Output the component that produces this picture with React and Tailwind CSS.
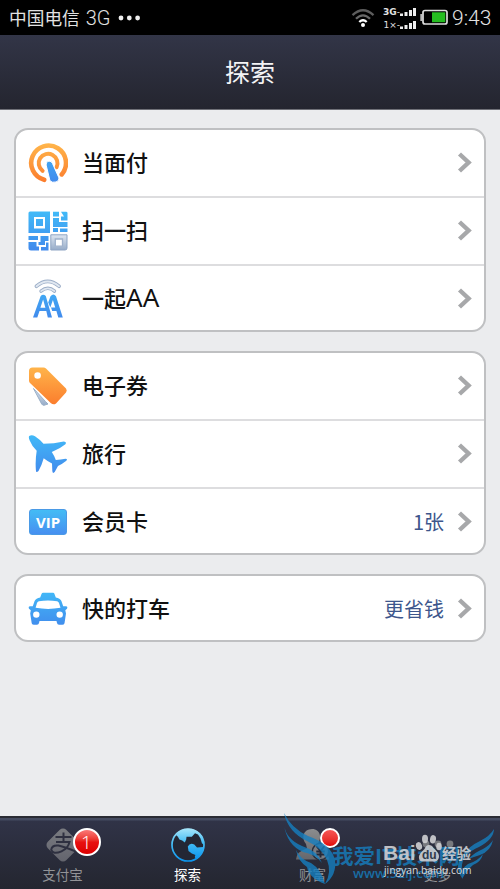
import React from "react";

const Defs = () => (
  <svg className="absolute h-0 w-0" aria-hidden="true">
    <defs>
      <linearGradient id="blue" x1="0" y1="0" x2="0" y2="40" gradientUnits="userSpaceOnUse">
        <stop offset="0" stopColor="#41bbf8" />
        <stop offset="1" stopColor="#4189ec" />
      </linearGradient>
      <linearGradient id="orange" x1="0" y1="0" x2="0" y2="40" gradientUnits="userSpaceOnUse">
        <stop offset="0" stopColor="#ffb64b" />
        <stop offset="1" stopColor="#fb7b2c" />
      </linearGradient>
      <linearGradient id="steel" x1="0" y1="0" x2="0" y2="1">
        <stop offset="0" stopColor="#dde6f1" />
        <stop offset="1" stopColor="#97acc8" />
      </linearGradient>
      <linearGradient id="globe" x1="0" y1="0" x2="0" y2="1">
        <stop offset="0" stopColor="#a5e5fa" />
        <stop offset="0.45" stopColor="#45bdf4" />
        <stop offset="1" stopColor="#0c95ee" />
      </linearGradient>
      <linearGradient id="gray" x1="0" y1="0" x2="1" y2="1">
        <stop offset="0" stopColor="#7b7d82" />
        <stop offset="1" stopColor="#62636c" />
      </linearGradient>
      <linearGradient id="person" x1="0" y1="0" x2="0" y2="1">
        <stop offset="0" stopColor="#8b8c8e" />
        <stop offset="1" stopColor="#66676c" />
      </linearGradient>
    </defs>
  </svg>
);

const Icon = ({ children }) => (
  <svg width="40" height="40" viewBox="0 0 40 40" className="block shrink-0">{children}</svg>
);

const PayIcon = () => (
  <Icon>
    <g fill="none" stroke="url(#orange)" strokeLinecap="round">
      <path d="M16.2 36.8A17.4 17.4 0 1 1 33.7 31.4" strokeWidth="4.6" />
      <path d="M14.6 27.8A9.4 9.4 0 1 1 28.6 24.2" strokeWidth="4" />
    </g>
    <path d="M18.1 22Q17.8 18.3 21 18.1Q23.4 18 24.5 20.5L31 35Q31.2 38 28 39Q24 40 22 37.8Z" fill="url(#blue)" stroke="#fff" strokeWidth="1" />
  </Icon>
);

const ScanIcon = () => (
  <Icon>
    <g fill="url(#blue)">
      <path fillRule="evenodd" d="M2 .5H22V22H.5V2Q.5.5 2 .5ZM6 6V17.5H17V6Z" />
      <path d="M8 8H15V15H8Z" />
      <path d="M25 .8H31V5.5H25ZM33 .8H38Q39.5.8 39.5 2V9.5H33V5.5H36ZM25 7H31V11H39.5V16H25ZM25 17H30V21H25ZM32 17.5H39.5V21H32Z" />
      <path d="M.5 25H10V29H.5ZM12.5 25H20.5V30H17V34H10.5V31H12.5ZM.5 31H8.5V35.5H11V39.5H3Q.5 39.5.5 37ZM13 36H18V31.5H20.5V39.5H13Z" />
    </g>
    <path d="M22.8 23.8H39V37Q39 39 37 39H22.8Z" fill="url(#steel)" stroke="#8fa5c4" />
    <path d="M27.3 28H34.5V35.2H27.3Z" fill="#fff" stroke="#a0b2cc" strokeWidth="1.3" />
  </Icon>
);

const SplitIcon = () => (
  <Icon>
    <g fill="none" strokeLinecap="round">
      <path d="M8.5 7.2Q19.7-2.4 31 7.2" stroke="#9badc7" strokeWidth="3.7" />
      <path d="M8.5 7.2Q19.7-2.4 31 7.2" stroke="#e1e8f1" strokeWidth="1.9" />
      <path d="M13 12.1Q20 6.5 26.5 12.1" stroke="#9badc7" strokeWidth="3.4" />
      <path d="M13 12.1Q20 6.5 26.5 12.1" stroke="#e1e8f1" strokeWidth="1.6" />
    </g>
    <path fillRule="evenodd" fill="url(#blue)" d="M12.7 17Q15.2 14.3 17.8 17L24 38.5H19.8L18.3 32H11.5L9.3 38.5H5ZM15.1 20.5L12.4 28.7H17.4Z" />
    <path fillRule="evenodd" fill="url(#blue)" d="M22.5 17.3Q25.5 13.8 28 17.3L34.8 38.5H30.3L28.4 32H24.2L23 28.5H27.2L24.9 21L22.3 28.5L20.2 23.5Z" />
  </Icon>
);

const TagIcon = () => (
  <Icon>
    <path d="M5.5 22.5L17.5 35.5L20 38L16 39.3Q14.5 39.4 13.7 38Z" fill="url(#steel)" stroke="#9aafc7" />
    <path fillRule="evenodd" d="M1 5Q1 1.5 4.5 1.5L15.5 1.5Q17 1.5 18 2.6L38 22.5Q39.5 24.5 38 26.4L28 37.4Q25.5 39.2 23 37.2L2 17Q1 16 1 14.5ZM9.6 6.2A3.3 3.3 0 1 0 9.6 12.8A3.3 3.3 0 1 0 9.6 6.2Z" fill="url(#orange)" />
  </Icon>
);

const PlaneIcon = () => (
  <Icon>
    <path fill="url(#blue)" d="M1.2 2.1Q3.5.3 7 2.2Q12 5.5 15.5 9.7Q26 9.5 35.8 7.4Q39 7.8 37.4 10.2Q32 14.7 23.8 18Q26.5 22 27.8 26Q33 25.7 37.5 24.8Q40.2 25 38 27Q34.2 30 30 32Q28.1 35.5 26.7 38.1Q24.8 40.2 24.3 37L24 29.5Q19 27 15.7 24.3Q13.6 32 10.5 37Q8 39.5 7.9 36.2Q7.1 26.8 8.7 16.8Q3.6 11.5 1.7 6.4Q.3 3.5 1.2 2.1Z" />
  </Icon>
);

const VipIcon = () => (
  <div className="flex w-10 shrink-0 justify-center">
    <div className="flex h-[26px] w-[38px] items-center justify-center rounded-[3px] border border-[#4a9ae6] bg-linear-to-b from-[#43bcf5] to-[#468ff0] font-['Open_Sans',sans-serif] text-[15px] leading-none font-bold text-white">VIP</div>
  </div>
);

const TaxiIcon = () => (
  <Icon>
    <path fillRule="evenodd" fill="url(#blue)" d="M12.2 8.6L13.5 5Q13.9 3.8 15.2 3.8H25Q26.2 3.8 26.5 5L27.8 8.6Q32 9.2 33.4 12L35.2 17.2H38Q40 17.5 39 19.8L37.3 21.3L38 24.5L36.5 34.2Q36 35.8 34.2 35.8H31Q29.3 35.8 29 34L28.5 32H11.5L11 34Q10.7 35.8 9 35.8H6Q4.3 35.8 3.7 34.2L2.2 24.5L2.8 21.3L1 19.8Q0 17.4 2 17.2H4.8L6.6 12Q8 9.2 12.2 8.6ZM10.8 12.2Q9.4 12.6 9 14L7.6 18.8Q20 21 32.5 18.8L31 14Q30.6 12.6 29.2 12.2Q20 10.9 10.8 12.2ZM8.3 22.4A3.2 3.2 0 1 0 8.3 28.8A3.2 3.2 0 1 0 8.3 22.4ZM31.7 22.4A3.2 3.2 0 1 0 31.7 28.8A3.2 3.2 0 1 0 31.7 22.4Z" />
  </Icon>
);

const groups = [
  [
    { label: "当面付", icon: PayIcon },
    { label: "扫一扫", icon: ScanIcon },
    { label: "一起", latin: "AA", icon: SplitIcon },
  ],
  [
    { label: "电子券", icon: TagIcon },
    { label: "旅行", icon: PlaneIcon },
    { label: "会员卡", note: "1张", icon: VipIcon },
  ],
  [{ label: "快的打车", note: "更省钱", icon: TaxiIcon }],
];

function Row({ item, last }) {
  const Glyph = item.icon;
  return (
    <li className={"flex items-center pr-[12px] pl-[12px] " + (last ? "h-[64px] pt-[2px]" : "h-[68px] border-b-2 border-[#dddddf]")}>
      <Glyph />
      <span className="ml-[14px] flex-1 pb-[4px] text-[22px] leading-[30px] font-medium text-[#111]">
        {item.label}
        {item.latin && <span className="font-['Noto_Sans'] text-[26px] leading-none font-normal">{item.latin}</span>}
      </span>
      {item.note && <span className="mr-[13px] pb-[1px] text-[20px] leading-[30px] text-[#3d568c]">{item.note}</span>}
      <svg width="15" height="22" viewBox="0 0 15 22" className="block shrink-0">
        <path d="M2.5 2L11.6 10.5L2.5 19" fill="none" stroke="#a7a8aa" strokeWidth="4.4" />
      </svg>
    </li>
  );
}

const Signal = () => (
  <svg width="16" height="9" viewBox="0 0 16 9" className="shrink-0">
    <path d="M0 5.5H3V8H0ZM4.5 4H7.5V8H4.5ZM9 2H12V8H9ZM13 0H16V8H13Z" fill="#eee" />
  </svg>
);

function StatusBar() {
  return (
    <div className="flex h-[35px] items-center bg-black pl-[9px] text-[#e2e2e2]">
      <span className="text-[17.7px] leading-none">中国电信</span>
      <span className="ml-[6px] font-['Roboto'] text-[20px] leading-none font-light">3G</span>
      <svg width="23" height="6" viewBox="0 0 23 6" className="ml-[7px]">
        <g fill="#eee"><circle cx="3" cy="3" r="2.4" /><circle cx="11.3" cy="3" r="2.4" /><circle cx="19.6" cy="3" r="2.4" /></g>
      </svg>
      <svg width="24" height="20" viewBox="0 0 24 20" className="ml-auto">
        <g fill="none" strokeWidth="2.3">
          <path d="M1.5 7.2Q12-2.8 22.5 7.2" stroke="#5d5d5d" />
          <path d="M5 10.8Q12 3.8 19 10.8" stroke="#696969" />
          <path d="M8.3 14Q12 10.4 15.7 14" stroke="#fff" />
        </g>
        <circle cx="12" cy="17" r="2" fill="#fff" />
      </svg>
      <div className="ml-[5px] flex w-[36px] flex-col gap-[4px] pt-[2px] font-['DejaVu_Sans'] text-[9px] leading-[9px] font-bold">
        <div className="flex items-center justify-end"><span>3G</span><span className="font-normal">-</span><Signal /></div>
        <div className="flex items-center justify-end"><span className="font-normal">1×-</span><Signal /></div>
      </div>
      <svg width="28" height="17" viewBox="0 0 28 17" className="ml-[4px]">
        <path d="M1.3 5V12" stroke="#bbb" strokeWidth="2" />
        <rect x="3" y="1.5" width="24" height="13.5" rx="2" fill="#000" stroke="#ddd" strokeWidth="1.7" />
        <path d="M12 3.3H25.3V13.2H12Z" fill="#25bd20" />
      </svg>
      <span className="mr-[8px] ml-[4px] w-[40px] pt-[2px] font-['Roboto'] text-[21px] leading-none font-light">9:43</span>
    </div>
  );
}

const AlipayIcon = () => (
  <svg width="34" height="34" viewBox="0 0 34 34">
    <rect x="4" y="4" width="26" height="26" rx="4.5" transform="rotate(45 17 17)" fill="url(#gray)" />
    <g fill="none" stroke="#2e3040" strokeWidth="2">
      <path d="M9.5 9H25.5M17.5 4.5V14M10 14H23.5Q22 20.5 15.5 23.3Q7 27 5.2 21.8Q5.8 16.8 12.5 17.5Q19 19 30 23.7" />
    </g>
  </svg>
);

const GlobeIcon = () => (
  <svg width="34" height="34" viewBox="0 0 34 34">
    <circle cx="17" cy="17" r="16" fill="#232734" stroke="url(#globe)" strokeWidth="1.7" />
    <path fill="url(#globe)" d="M5 7Q10 0 18 .8Q27 1.2 31.5 9L33.2 16.5L31 15.5L29.5 10.5L27 6.5L24 5.2L20.8 8.8L15.5 8.7L15.2 11.5L13.8 14.5L11.2 12.6L8.4 11.5L6.9 8.7ZM16.8 18.5Q19 14.4 23.3 16.6L26 19.5L32.5 19Q32 26.5 25.5 31.2Q22.8 29.2 24.5 27L20.8 25.4L17.5 23Z" />
  </svg>
);

const WealthIcon = () => (
  <svg width="36" height="34" viewBox="0 0 36 34">
    <path d="M17 1C26 1 27 11 22.5 16L23 20Q33 23 34 31.5H1Q2 23 12 20.5L11 16C6 10 8 1 17 1Z" fill="url(#person)" />
    <circle cx="25.5" cy="23.5" r="8.2" fill="#7a7c82" stroke="#292d3b" strokeWidth="1.6" />
    <path d="M21.5 18L25.5 23L29.5 18M25.5 22.5V29.5M21.3 23.5H29.7M21.3 26.5H29.7" fill="none" stroke="#242938" strokeWidth="1.9" />
  </svg>
);

const MoreIcon = () => (
  <svg width="34" height="34" viewBox="0 0 34 34">
    <g fill="#77797e"><circle cx="5" cy="16" r="3.4" /><circle cx="17" cy="16" r="3.4" /><circle cx="29" cy="16" r="3.4" /></g>
  </svg>
);

function Tab({ icon, label, active, badge }) {
  return (
    <div className="flex flex-1 flex-col items-center pt-[10px]">
      <div className="relative h-[34px]">
        {icon}
        {badge}
      </div>
      <span className={"mt-[3px] text-[13.5px] leading-[18px] " + (active ? "text-white" : "text-[#929397]")}>{label}</span>
    </div>
  );
}

function Watermarks() {
  return (
    <div className="pointer-events-none absolute inset-x-0 bottom-0 h-[84px]">
      <svg width="220" height="84" viewBox="280 0 220 84" className="absolute top-0 left-[280px] opacity-80">
        <g fill="#167fc0">
          <path d="M284 8Q291 23 308 31Q331 39 335 55Q337 70 325 79Q332 67 327 55Q322 43 307 36Q288 27 284 8Z" />
          <path d="M284 20Q286 34 302 41Q318 46 322 58Q315 49 303 47Q287 40 284 20Z" />
          <path d="M296 45Q300 54 311 58Q321 64 325 79Q309 73 307 62Q298 56 296 45Z" />
          <path d="M494 24Q494 34 479 42Q463 49 462 60Q461 67 462 73Q454 61 462 51Q469 41 480 36Q490 31 494 24Z" />
          <path d="M493 35Q491 46 480 50L468 54Q477 46 483 44Q490 40 493 35Z" />
          <path d="M483 49Q481 57 473 60Q467 65 462 74Q460 64 468 59Q478 56 483 49Z" />
        </g>
        <text x="332" y="59" fill="#167fc0" fontSize="20.5" fontWeight="700" fontFamily="Noto Sans CJK SC, sans-serif" textLength="128" lengthAdjust="spacingAndGlyphs">我爱IT技术网</text>
        <text x="353" y="73" fill="#167fc0" fontSize="13" fontWeight="600" fontFamily="Open Sans, sans-serif" textLength="91" lengthAdjust="spacingAndGlyphs">www.52ij.com</text>
      </svg>
      <div className="absolute top-[36px] left-[383px] flex items-center text-[#cfd0d3] opacity-90">
        <span className="w-[32px] font-['Liberation_Sans'] text-[21px] leading-[24px] font-bold">Bai</span>
        <svg width="27" height="30" viewBox="0 0 27 30" className="-mt-[10px]">
          <g fill="#cfd0d3">
            <ellipse cx="4" cy="13" rx="3" ry="4" transform="rotate(-18 4 13)" />
            <ellipse cx="10" cy="6" rx="3" ry="4.2" />
            <ellipse cx="18" cy="6.3" rx="3" ry="4.2" transform="rotate(10 18 6.3)" />
            <ellipse cx="24" cy="13.5" rx="2.8" ry="3.8" />
            <path d="M14 12Q17 12 18.5 15Q24.5 20 24 24Q23 29.5 18 28.5H9Q3 29 4 23Q5 20 9.5 16Q11 12 14 12Z" />
          </g>
          <text x="7" y="26" fill="#323645" fontSize="12" fontWeight="700" fontFamily="Liberation Sans">du</text>
        </svg>
        <span className="text-[14.5px] leading-[24px] font-bold">经验</span>
      </div>
      <div className="absolute top-[58px] left-[384px] font-['Open_Sans'] text-[10.3px] leading-[15px] font-medium text-[#dadbde]">jingyan.baidu.com</div>
    </div>
  );
}

export default function App() {
  return (
    <div className="relative flex h-[889px] w-[500px] flex-col overflow-hidden bg-[#ebecee] font-['Noto_Sans_CJK_SC',sans-serif]">
      <Defs />
      <StatusBar />
      <header className="flex h-[75px] items-center justify-center border-b border-[#6f7077] bg-linear-to-b from-[#323547] to-[#24252f] text-[25px] text-[#f3f3f5]">
        <h1 className="pb-[1px] leading-none">探索</h1>
      </header>
      <main className="flex flex-1 flex-col gap-[19px] px-[14px] pt-[18px]">
        {groups.map((items, index) => (
          <ul key={index} className="rounded-[14px] border-2 border-[#bfc0c2] bg-white">
            {items.map((item, i) => <Row key={item.label} item={item} last={i === items.length - 1} />)}
          </ul>
        ))}
      </main>
      <nav className="flex h-[73px] border-t-2 border-[#292b33] bg-linear-to-b from-[#444b60] from-[2px] via-[#303347] via-[3px] to-[#242630]">
        <Tab label="支付宝" icon={<AlipayIcon />} badge={
          <span className="absolute top-0 left-[27px] flex h-[28px] w-[28px] items-center justify-center rounded-full border-2 border-white bg-linear-to-b from-[#fa7777] via-[#e81010] to-[#dc0000] font-['Open_Sans'] text-[19px] leading-none font-light text-white">1</span>
        } />
        <Tab label="探索" active icon={<GlobeIcon />} />
        <Tab label="财富" icon={<WealthIcon />} badge={
          <span className="absolute top-0 left-[25px] h-[20px] w-[20px] rounded-full border-2 border-white bg-linear-to-b from-[#f65555] to-[#e20000]" />
        } />
        <Tab label="更多" icon={<MoreIcon />} />
      </nav>
      <Watermarks />
    </div>
  );
}
